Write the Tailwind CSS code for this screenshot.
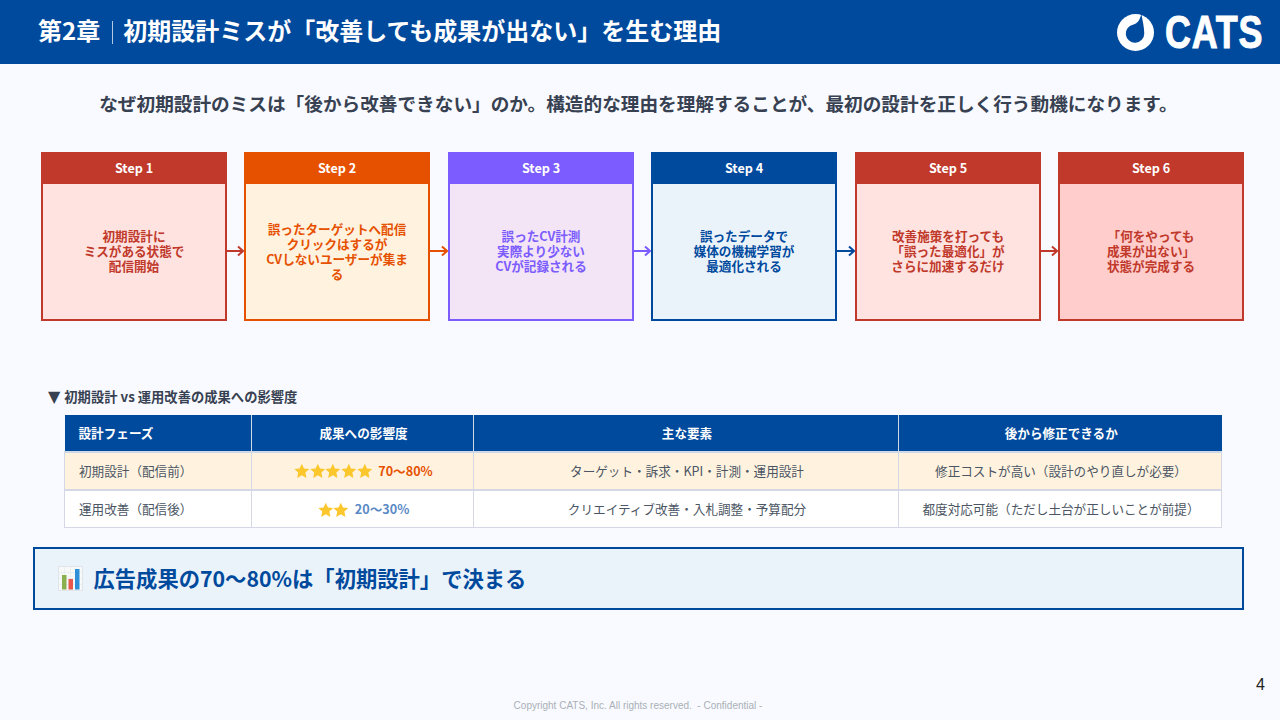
<!DOCTYPE html>
<html lang="ja">
<head>
  <meta charset="UTF-8">
  <title>第2章</title>
  <script src="https://cdn.jsdelivr.net/npm/@tailwindcss/browser@4"></script>
</head>
<body class="w-[1280px] h-[720px] overflow-hidden relative bg-[#f8faff] font-['Noto_Sans_CJK_JP','Noto_Sans',sans-serif]">
  <!-- header -->
  <header class="h-16 bg-[#004a9e] flex items-center justify-between pl-[38px] pr-[18px]">
    <h1 class="flex items-center text-white text-[24px] font-bold pb-1">
      <span>第2章</span>
      <span class="w-px h-[23px] bg-white/70 ml-3 mr-[10px] mt-1"></span>
      <span>初期設計ミスが「改善しても成果が出ない」を生む理由</span>
    </h1>
    <div class="flex items-center gap-[11px] text-white">
      <svg width="37" height="37" viewBox="0 0 38 38">
        <circle cx="19" cy="19" r="19" fill="#fff"/>
        <path fill="#004a9e" d="M25 0C26 6 28 13 28 20A9.500 9.500 0 1 1 17 10.700C21 10 23.500 6 25 0Z"/>
      </svg>
      <span class="font-['Liberation_Sans',sans-serif] font-bold text-[46px] leading-none w-[97px] inline-block origin-left scale-x-[0.78] tracking-[1px] [-webkit-text-stroke:1px_white]">CATS</span>
    </div>
  </header>

  <main class="flex flex-col">
    <p class="mt-[25px] pr-[3px] text-center text-[18.650px] leading-7 font-bold text-[#374151]">なぜ初期設計のミスは「後から改善できない」のか。構造的な理由を理解することが、最初の設計を正しく行う動機になります。</p>

    <!-- steps -->
    <div class="mt-[35px] ml-[41px] flex items-stretch h-[169px]">
      <div class="w-[186px] flex flex-col border-2 border-[#c0392b] bg-[#ffe3e0]">
        <div class="h-[32px] -mt-[2px] bg-[#c0392b] text-white text-[12.600px] font-bold flex items-center justify-center">Step 1</div>
        <div class="flex-1 flex items-center justify-center text-center text-[12.600px] leading-[15px] font-bold text-[#c0392b] px-[18px] pb-[2px]"><span>初期設計に<br>ミスがある状態で<br>配信開始</span></div>
      </div>
      <div class="w-[17px] flex items-center"><svg width="17" height="12" viewBox="0 0 17 12" class="mt-[29px]"><path d="M0 6h16M11 1.500 16 6l-5 4.500" fill="none" stroke="#c0392b" stroke-width="2"/></svg></div>
      <div class="w-[186px] flex flex-col border-2 border-[#e65100] bg-[#fff3e0]">
        <div class="h-[32px] -mt-[2px] bg-[#e65100] text-white text-[12.600px] font-bold flex items-center justify-center">Step 2</div>
        <div class="flex-1 flex items-center justify-center text-center text-[12.600px] leading-[15px] font-bold text-[#e65100] px-[18px] pb-[2px]"><span>誤ったターゲットへ配信<br>クリックはするが<br>CVしないユーザーが集まる</span></div>
      </div>
      <div class="w-[18px] flex items-center"><svg width="18" height="12" viewBox="0 0 18 12" class="mt-[29px]"><path d="M0 6h17M12 1.500 17 6l-5 4.500" fill="none" stroke="#e65100" stroke-width="2"/></svg></div>
      <div class="w-[186px] flex flex-col border-2 border-[#7c5cff] bg-[#f3e5f5]">
        <div class="h-[32px] -mt-[2px] bg-[#7c5cff] text-white text-[12.600px] font-bold flex items-center justify-center">Step 3</div>
        <div class="flex-1 flex items-center justify-center text-center text-[12.600px] leading-[15px] font-bold text-[#7c5cff] px-[18px] pb-[2px]"><span>誤ったCV計測<br>実際より少ない<br>CVが記録される</span></div>
      </div>
      <div class="w-[17px] flex items-center"><svg width="17" height="12" viewBox="0 0 17 12" class="mt-[29px]"><path d="M0 6h16M11 1.500 16 6l-5 4.500" fill="none" stroke="#7c5cff" stroke-width="2"/></svg></div>
      <div class="w-[186px] flex flex-col border-2 border-[#004a9e] bg-[#ebf3fa]">
        <div class="h-[32px] -mt-[2px] bg-[#004a9e] text-white text-[12.600px] font-bold flex items-center justify-center">Step 4</div>
        <div class="flex-1 flex items-center justify-center text-center text-[12.600px] leading-[15px] font-bold text-[#004a9e] px-[18px] pb-[2px]"><span>誤ったデータで<br>媒体の機械学習が<br>最適化される</span></div>
      </div>
      <div class="w-[18px] flex items-center"><svg width="18" height="12" viewBox="0 0 18 12" class="mt-[29px]"><path d="M0 6h17M12 1.500 17 6l-5 4.500" fill="none" stroke="#004a9e" stroke-width="2"/></svg></div>
      <div class="w-[186px] flex flex-col border-2 border-[#c0392b] bg-[#ffe3e0]">
        <div class="h-[32px] -mt-[2px] bg-[#c0392b] text-white text-[12.600px] font-bold flex items-center justify-center">Step 5</div>
        <div class="flex-1 flex items-center justify-center text-center text-[12.600px] leading-[15px] font-bold text-[#c0392b] px-[18px] pb-[2px]"><span>改善施策を打っても<br>「誤った最適化」が<br>さらに加速するだけ</span></div>
      </div>
      <div class="w-[17px] flex items-center"><svg width="17" height="12" viewBox="0 0 17 12" class="mt-[29px]"><path d="M0 6h16M11 1.500 16 6l-5 4.500" fill="none" stroke="#c0392b" stroke-width="2"/></svg></div>
      <div class="w-[186px] flex flex-col border-2 border-[#c0392b] bg-[#ffcdcb]">
        <div class="h-[32px] -mt-[2px] bg-[#c0392b] text-white text-[12.600px] font-bold flex items-center justify-center">Step 6</div>
        <div class="flex-1 flex items-center justify-center text-center text-[12.600px] leading-[15px] font-bold text-[#c0392b] px-[18px] pb-[2px]"><span>「何をやっても<br>成果が出ない」<br>状態が完成する</span></div>
      </div>
    </div>

    <!-- table -->
    <h2 class="mt-[66px] ml-[48px] h-[20px] flex items-center text-[13.300px] font-bold text-[#374151]"><span class="text-[16px] mr-[4px] font-['DejaVu_Sans',sans-serif]">▼</span>初期設計 vs 運用改善の成果への影響度</h2>
    <table class="mt-[8px] ml-[64px] w-[1158px] table-fixed border-collapse text-[12.600px] text-[#4b5563]">
      <colgroup><col class="w-[187px]"><col class="w-[222px]"><col class="w-[425px]"><col></colgroup>
      <thead>
        <tr class="h-[37px] bg-[#004a9e] text-white font-bold border-b-2 border-[#cfd8e6]">
          <th class="text-left pl-[14px] border-r border-[#cfd8e6]">設計フェーズ</th>
          <th class="pl-[2px] border-r border-[#cfd8e6]">成果への影響度</th>
          <th class="pl-[2px] border-r border-[#cfd8e6]">主な要素</th>
          <th class="pl-[2px]">後から修正できるか</th>
        </tr>
      </thead>
      <tbody>
        <tr class="h-[38px] bg-[#fff3e0] border-b-2 border-[#d5d8e4]">
          <td class="pl-[14px] border-x border-[#d5d8e4]">初期設計（配信前）</td>
          <td class="pl-[2px] border-r border-[#d5d8e4]">
            <div class="flex items-center justify-center font-bold text-[#e65100]">
              <span class="flex mr-[6px]">
                <svg width="15.600" height="15.600" viewBox="0 0 24 24"><path fill="#fcc62d" d="M12 1 15.400 8.300 23.500 9.300 17.500 14.800 19.100 22.900 12 18.900 4.900 22.900 6.500 14.800 0.500 9.300 8.600 8.300z"/></svg>
                <svg width="15.600" height="15.600" viewBox="0 0 24 24"><path fill="#fcc62d" d="M12 1 15.400 8.300 23.500 9.300 17.500 14.800 19.100 22.900 12 18.900 4.900 22.900 6.500 14.800 0.500 9.300 8.600 8.300z"/></svg>
                <svg width="15.600" height="15.600" viewBox="0 0 24 24"><path fill="#fcc62d" d="M12 1 15.400 8.300 23.500 9.300 17.500 14.800 19.100 22.900 12 18.900 4.900 22.900 6.500 14.800 0.500 9.300 8.600 8.300z"/></svg>
                <svg width="15.600" height="15.600" viewBox="0 0 24 24"><path fill="#fcc62d" d="M12 1 15.400 8.300 23.500 9.300 17.500 14.800 19.100 22.900 12 18.900 4.900 22.900 6.500 14.800 0.500 9.300 8.600 8.300z"/></svg>
                <svg width="15.600" height="15.600" viewBox="0 0 24 24"><path fill="#fcc62d" d="M12 1 15.400 8.300 23.500 9.300 17.500 14.800 19.100 22.900 12 18.900 4.900 22.900 6.500 14.800 0.500 9.300 8.600 8.300z"/></svg>
              </span>70〜80%
            </div>
          </td>
          <td class="pl-[2px] text-center border-r border-[#d5d8e4]">ターゲット・訴求・KPI・計測・運用設計</td>
          <td class="pl-[2px] text-center border-r border-[#d5d8e4]">修正コストが高い（設計のやり直しが必要）</td>
        </tr>
        <tr class="h-[37px] bg-white border-y border-[#d5d8e4]">
          <td class="pl-[14px] pt-[2px] border-x border-[#d5d8e4]">運用改善（配信後）</td>
          <td class="pl-[2px] pt-[2px] border-r border-[#d5d8e4]">
            <div class="flex items-center justify-center font-bold text-[#5a8ac6]">
              <span class="flex mr-[6px]">
                <svg width="15.600" height="15.600" viewBox="0 0 24 24"><path fill="#fcc62d" d="M12 1 15.400 8.300 23.500 9.300 17.500 14.800 19.100 22.900 12 18.900 4.900 22.900 6.500 14.800 0.500 9.300 8.600 8.300z"/></svg>
                <svg width="15.600" height="15.600" viewBox="0 0 24 24"><path fill="#fcc62d" d="M12 1 15.400 8.300 23.500 9.300 17.500 14.800 19.100 22.900 12 18.900 4.900 22.900 6.500 14.800 0.500 9.300 8.600 8.300z"/></svg>
              </span>20〜30%
            </div>
          </td>
          <td class="pl-[2px] pt-[2px] text-center border-r border-[#d5d8e4]">クリエイティブ改善・入札調整・予算配分</td>
          <td class="pl-[2px] pt-[2px] text-center border-r border-[#d5d8e4]">都度対応可能（ただし土台が正しいことが前提）</td>
        </tr>
      </tbody>
    </table>

    <!-- callout -->
    <div class="mt-[19px] ml-[33px] w-[1211px] h-[63px] border-2 border-[#004a9e] bg-[#ebf3fa] flex items-center pl-[23px] gap-[10.500px]">
      <svg width="25" height="25" viewBox="0 0 25 25">
        <rect x="0.500" y="0.500" width="24" height="24" fill="#f7f9f9" stroke="#dfe5ea"/>
        <path d="M0 6.500h25M0 12.500h25M0 18.500h25M6.500 0v25M12.500 0v25M18.500 0v25" stroke="#e3e8ec" stroke-width="0.600"/>
        <rect x="4" y="9" width="4.500" height="14.500" fill="#8bb04f"/>
        <rect x="10.500" y="13" width="4.500" height="10.500" fill="#e8574a"/>
        <rect x="17" y="3" width="4.500" height="20.500" fill="#2f8fd8"/>
      </svg>
      <span class="text-[21.300px] font-bold text-[#004a9e]">広告成果の70〜80%は「初期設計」で決まる</span>
    </div>
  </main>

  <span class="absolute right-[15px] top-[673px] text-[16px] text-[#222] font-['Liberation_Sans',sans-serif]">4</span>
  <p class="absolute left-0 right-[4px] top-[698px] text-center text-[10px] text-[#aab0b6] font-['Liberation_Sans',sans-serif]">Copyright CATS, Inc. All rights reserved.&nbsp; - Confidential -</p>
</body>
</html>
